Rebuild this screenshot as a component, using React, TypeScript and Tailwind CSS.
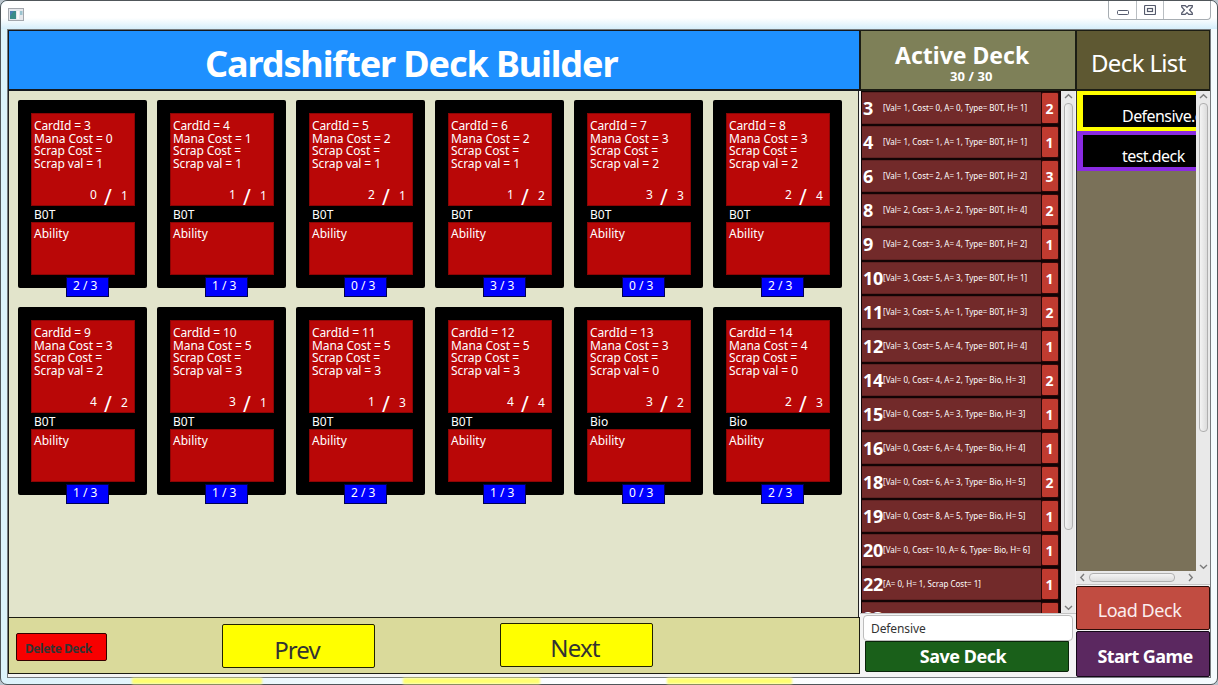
import React from "react";

type Card = [number, number, number, number, string, string, string];

// id, mana cost, scrap value, attack, health, type, count
const CARDS: Card[] = [
  [3, 0, 1, 0, "1", "B0T", "2 / 3"],
  [4, 1, 1, 1, "1", "B0T", "1 / 3"],
  [5, 2, 1, 2, "1", "B0T", "0 / 3"],
  [6, 2, 1, 1, "2", "B0T", "3 / 3"],
  [7, 3, 2, 3, "3", "B0T", "0 / 3"],
  [8, 3, 2, 2, "4", "B0T", "2 / 3"],
  [9, 3, 2, 4, "2", "B0T", "1 / 3"],
  [10, 5, 3, 3, "1", "B0T", "1 / 3"],
  [11, 5, 3, 1, "3", "B0T", "2 / 3"],
  [12, 5, 3, 4, "4", "B0T", "1 / 3"],
  [13, 3, 0, 3, "2", "Bio", "0 / 3"],
  [14, 4, 0, 2, "3", "Bio", "2 / 3"],
];

const DECK: [number, string, number][] = [
  [3, "[Val= 1, Cost= 0, A= 0, Type= B0T, H= 1]", 2],
  [4, "[Val= 1, Cost= 1, A= 1, Type= B0T, H= 1]", 1],
  [6, "[Val= 1, Cost= 2, A= 1, Type= B0T, H= 2]", 3],
  [8, "[Val= 2, Cost= 3, A= 2, Type= B0T, H= 4]", 2],
  [9, "[Val= 2, Cost= 3, A= 4, Type= B0T, H= 2]", 1],
  [10, "[Val= 3, Cost= 5, A= 3, Type= B0T, H= 1]", 1],
  [11, "[Val= 3, Cost= 5, A= 1, Type= B0T, H= 3]", 2],
  [12, "[Val= 3, Cost= 5, A= 4, Type= B0T, H= 4]", 1],
  [14, "[Val= 0, Cost= 4, A= 2, Type= Bio, H= 3]", 2],
  [15, "[Val= 0, Cost= 5, A= 3, Type= Bio, H= 3]", 1],
  [16, "[Val= 0, Cost= 6, A= 4, Type= Bio, H= 4]", 1],
  [18, "[Val= 0, Cost= 6, A= 3, Type= Bio, H= 5]", 2],
  [19, "[Val= 0, Cost= 8, A= 5, Type= Bio, H= 5]", 1],
  [20, "[Val= 0, Cost= 10, A= 6, Type= Bio, H= 6]", 1],
  [22, "[A= 0, H= 1, Scrap Cost= 1]", 1],
  [23, "", 1],
];

function Chevron({ d }: { d: string }) {
  return (
    <svg width="9" height="9" viewBox="0 0 9 9" fill="none" stroke="#7c7c7c" strokeWidth="1.4" className="shrink-0">
      <path d={d} />
    </svg>
  );
}

const UP = "M1 6 4.5 2.8 8 6";
const DOWN = "M1 3 4.5 6.2 8 3";
const LEFT = "M6 1 2.8 4.5 6 8";
const RIGHT = "M3 1 6.2 4.5 3 8";

function CardView({ card }: { card: Card }) {
  const [id, mana, scrap, attack, health, type, count] = card;
  return (
    <div className="flex h-[188px] w-[129px] flex-col rounded-[2px] bg-black px-[13px] pt-[13px] text-[12px] text-white">
      <div className="h-[93px] w-[104px] shrink-0 border border-[#8c0505] bg-[#b90707] pt-[6px] pl-[2px] leading-[12.6px] tracking-[-0.1px] whitespace-nowrap">
        <p>CardId = {id}</p>
        <p>Mana Cost = {mana}</p>
        <p>Scrap Cost =</p>
        <p>Scrap val = {scrap}</p>
        <div className="mt-[15px] flex h-[20px] items-center">
          <span className="ml-[56px] w-[7px]">{attack}</span>
          <span className="ml-[7px] w-[8px] pt-[4px] text-[21px]">/</span>
          <span className="ml-[9px] pt-[2px]">{health}</span>
        </div>
      </div>
      <div className="h-[16px] shrink-0 pl-[3px] leading-[17px]">{type}</div>
      <div className="h-[53px] w-[104px] shrink-0 border border-[#8c0505] bg-[#b90707] pt-[3px] pl-[2px] leading-[16px]">Ability</div>
      <div className="mt-[2px] ml-[35px] h-[20px] w-[43px] shrink-0 border border-[#000050] bg-[#0000ff] pl-[6px] leading-[16px] whitespace-nowrap">
        {count}
      </div>
    </div>
  );
}

function DeckRow({ row }: { row: [number, string, number] }) {
  const [id, text, count] = row;
  return (
    <div className="flex h-[34px] shrink-0 bg-[#120405] py-px pr-[2px] pl-px text-white">
      <div className="flex h-[32px] w-[179px] items-center border-y border-[#5e2222] bg-[#722a2a] whitespace-nowrap">
        <span className="w-[21px] pl-px text-[18px] font-bold tracking-[-0.4px]">{id}</span>
        <span className="text-[8px] leading-[12px]">{text}</span>
      </div>
      <div className="flex h-[32px] w-[18px] items-center justify-center rounded-[2px] border border-[#2c0808] bg-[#c03b30] pr-px text-[14px] font-bold">
        {count}
      </div>
    </div>
  );
}

export default function App() {
  return (
    <div className="h-[685px] w-[1218px] overflow-hidden bg-[#b9c4cc] font-['Noto_Sans',sans-serif]">
      <div className="flex h-[685px] flex-col rounded-[7px] border border-[#50565a] bg-linear-to-r from-[#dcf3fb] via-white to-[#f4fbfe]">
        <header className="flex h-[28px] shrink-0 justify-between rounded-t-[7px] bg-linear-to-b from-white from-60% to-[#d5eefa] pr-[6px] pl-[7px]">
          <svg width="16" height="13" viewBox="0 0 16 13" className="mt-[7px]">
            <rect x=".5" y=".5" width="15" height="12" fill="#e6e8ec" stroke="#a3a7ad" />
            <rect x="2" y="3" width="6" height="8" fill="#3c8b88" />
            <path d="M2 3h4l-4 5z" fill="#4b7fb3" />
            <rect x="9" y="3" width="2" height="8" fill="#fafafa" />
            <rect x="12" y="3" width="2.500" height="4" fill="#9cc3cf" />
          </svg>
          <div className="flex h-[19px] w-[103px] rounded-b-[4px] border border-t-0 border-[#a7adb2] bg-white">
            <div className="flex w-[28px] justify-center border-r border-[#b9bec2] pt-[9px]">
              <svg width="12" height="5" viewBox="0 0 12 5"><rect x=".5" y=".5" width="11" height="4" rx="1" fill="#fff" stroke="#555a6c" /></svg>
            </div>
            <div className="flex w-[27px] justify-center border-r border-[#b9bec2] pt-[4px]">
              <svg width="12" height="10" viewBox="0 0 12 10" fill="#fff" stroke="#555a6c" strokeWidth="1.2"><rect x=".5" y=".5" width="11" height="9" rx="1" /><rect x="3.500" y="3.500" width="5" height="3" /></svg>
            </div>
            <div className="flex flex-1 justify-center pt-[4px]">
              <svg width="12" height="10" viewBox="0 0 12 10" fill="#fff" stroke="#555a6c" strokeWidth="1.2"><path d="M.7.600h3.500L6 2.500 7.800.600h3.500v1.400L8.500 5l2.800 3v1.400H7.800L6 7.500 4.200 9.400H.7V8l2.800-3L.7 2z" /></svg>
            </div>
          </div>
        </header>

        <main className="ml-[6px] flex h-[649px] w-[1204px] shrink-0 border border-[#767b7e] bg-[#f4f4f4]">
          <section className="flex w-[852px] shrink-0 flex-col">
            <h1 className="h-[61px] shrink-0 border border-b-2 border-[#14181e] bg-[#1e90ff] pl-[196px] text-[36px] leading-[66px] font-bold tracking-[-1.1px] whitespace-nowrap text-white">
              Cardshifter Deck Builder
            </h1>
            <div className="mr-px grid h-[526px] shrink-0 grid-cols-[repeat(6,129px)] content-start gap-x-[10px] gap-y-[19px] border-x border-[#222] bg-[#e2e4cb] pt-[9px] pl-[9px]">
              {CARDS.map((card) => (
                <CardView key={card[0]} card={card} />
              ))}
            </div>
            <footer className="flex h-[57px] shrink-0 border border-[#1c1c12] bg-[#dada9b] pl-[7px] text-[#333]">
              <button className="mt-[15px] h-[28px] w-[91px] rounded-[2px] border border-[#300] bg-[#f70000] pl-[8px] text-left text-[12px] leading-[30px] font-bold tracking-[-0.45px] whitespace-nowrap">Delete Deck</button>
              <button className="mt-[6px] ml-[115px] h-[44px] w-[153px] rounded-[2px] border border-[#222200] bg-[#ffff00] pt-[7px] pr-[3px] text-[24px] tracking-[-0.9px]">Prev</button>
              <button className="mt-[5px] ml-[125px] h-[44px] w-[153px] rounded-[2px] border border-[#222200] bg-[#ffff00] pt-[6px] pr-[3px] text-[24px] tracking-[-0.8px]">Next</button>
            </footer>
          </section>

          <section className="flex w-[216px] shrink-0 flex-col">
            <div className="h-[61px] shrink-0 border border-b-2 border-[#1c1d14] bg-[#7e8058] pt-[8px] pl-[34px] font-bold whitespace-nowrap text-white">
              <h2 className="text-[23px] leading-[32px]">Active Deck</h2>
              <p className="pl-[55px] text-[13px] leading-[11px] tracking-[0.1px]">30 / 30</p>
            </div>
            <div className="flex h-[523px] shrink-0 border-b border-[#c4c4c4] pl-px">
              <div className="flex w-[200px] flex-col overflow-hidden bg-[#120405]">
                {DECK.map((row) => (
                  <DeckRow key={row[0]} row={row} />
                ))}
              </div>
              <div className="flex w-[14px] flex-col items-center bg-[#e9e9e9] pt-[1px]">
                <Chevron d={UP} />
                <div className="mt-[2px] h-[427px] w-[9px] rounded-[4px] border border-[#b0b0b0] bg-linear-to-r from-[#f4f4f4] to-[#dcdcdc]" />
                <div className="flex flex-1 items-end pb-[1px]"><Chevron d={DOWN} /></div>
              </div>
            </div>
            <div className="mt-[1px] ml-[3px] h-[26px] w-[210px] shrink-0 rounded-[4px] border border-[#bdbdbd] bg-white pl-[7px] text-[12px] leading-[26px] tracking-[-0.1px] text-[#333]">Defensive</div>
            <button className="ml-[5px] h-[31px] w-[204px] shrink-0 rounded-b-[2px] border border-[#0a240a] bg-[#1a601a] pr-[8px] text-[18px] leading-[29px] font-bold tracking-[-0.5px] text-white">Save Deck</button>
          </section>

          <section className="flex w-[134px] shrink-0 flex-col">
            <h2 className="h-[61px] shrink-0 border border-b-2 border-[#1c1d14] bg-[#5e5832] pl-[14px] text-[24px] leading-[64px] tracking-[-0.65px] whitespace-nowrap text-white">Deck List</h2>
            <div className="flex h-[480px] shrink-0">
              <div className="w-[120px] overflow-hidden border-l border-[#333] bg-[#7a7159] text-[16px] tracking-[-0.55px] whitespace-nowrap text-white">
                <div className="h-[40px] bg-[#ffff00] pt-[4px] pl-[6px]"><div className="h-[32px] bg-black pl-[39px] leading-[43px]">Defensive.deck</div></div>
                <div className="h-[40px] bg-[#8a2be2] pt-[4px] pl-[6px]"><div className="h-[32px] bg-black pl-[39px] leading-[43px]">test.deck</div></div>
              </div>
              <div className="flex w-[14px] flex-col items-center bg-[#e9e9e9] pt-[1px]">
                <Chevron d={UP} />
                <div className="mt-[2px] h-[329px] w-[9px] rounded-[4px] border border-[#b0b0b0] bg-linear-to-r from-[#f4f4f4] to-[#dcdcdc]" />
                <div className="flex flex-1 items-end"><Chevron d={DOWN} /></div>
              </div>
            </div>
            <div className="flex h-[14px] shrink-0 items-center border-b border-[#c4c4c4] bg-[#e9e9e9] pl-[2px]">
              <Chevron d={LEFT} />
              <div className="ml-[2px] h-[9px] w-[86px] rounded-[4px] border border-[#b0b0b0] bg-linear-to-b from-[#f4f4f4] to-[#dcdcdc]" />
              <div className="ml-[11px]"><Chevron d={RIGHT} /></div>
            </div>
            <button className="mt-px h-[44px] shrink-0 rounded-[2px] border border-[#2c0c08] bg-[#c14c41] pt-[5px] pr-[7px] text-[18px] tracking-[-0.45px] text-[#fbeeee]">Load Deck</button>
            <button className="mt-px h-[46px] shrink-0 rounded-[2px] border border-[#140818] bg-[#5b2860] pt-[5px] pl-[4px] text-[18px] font-bold tracking-[-0.6px] whitespace-nowrap text-white">Start Game</button>
          </section>
        </main>
        <div className="flex h-[6px] shrink-0">
          <div className="ml-[131px] h-full w-[130px] bg-[#ffff70] blur-[1px]" />
          <div className="ml-[141px] h-full w-[137px] bg-[#ffff70] blur-[1px]" />
          <div className="ml-[127px] h-full w-[125px] bg-[#ffff70] blur-[1px]" />
        </div>
      </div>
    </div>
  );
}
